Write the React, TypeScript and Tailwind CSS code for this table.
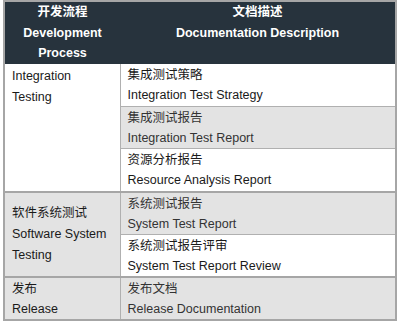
import React from 'react';

const font = { fontFamily: '"Liberation Sans", "Noto Sans CJK SC", sans-serif' };

export default function App() {
  return (
    <div className="w-[400px] h-[324px] bg-white px-[3px]" style={font}>
      <table className="w-[394px] border-collapse border-2 border-[#a6a6a6] text-[12.5px] leading-[20px] text-[#1a1a1a]">
        <thead>
          <tr className="bg-[#27333d] text-white font-bold align-top">
            <th className="w-[116px] h-[60px] text-center font-bold leading-[20.5px]">
              开发流程
              <br />
              Development
              <br />
              Process
            </th>
            <th className="text-center font-bold leading-[20.5px]">
              文档描述
              <br />
              Documentation Description
            </th>
          </tr>
        </thead>
        <tbody>
          {/* Integration testing */}
          <tr className="h-[43px]">
            <td rowSpan={3} className="align-top pl-[7px] pt-[2px] leading-[21px] border-r border-[#b0b0b0]">
              Integration
              <br />
              Testing
            </td>
            <td className="pl-[7px] pt-[1px] align-top">
              集成测试策略
              <br />
              Integration Test Strategy
            </td>
          </tr>
          <tr className="h-[42px] bg-[#e3e3e3] text-[#333]">
            <td className="pl-[7px] pt-[1px] align-top border-t border-[#b0b0b0]">
              集成测试报告
              <br />
              Integration Test Report
            </td>
          </tr>
          <tr className="h-[43px]">
            <td className="pl-[7px] pt-[1px] align-top border-t border-[#b0b0b0]">
              资源分析报告
              <br />
              Resource Analysis Report
            </td>
          </tr>

          {/* Software system testing */}
          <tr className="h-[42px] border-t-2 border-[#a6a6a6]">
            <td rowSpan={2} className="pl-[7px] align-middle leading-[21px] bg-[#e3e3e3] border-r border-[#b0b0b0]">
              软件系统测试
              <br />
              Software System
              <br />
              Testing
            </td>
            <td className="pl-[7px] pt-[1px] align-top bg-[#e3e3e3] text-[#333]">
              系统测试报告
              <br />
              System Test Report
            </td>
          </tr>
          <tr className="h-[43px]">
            <td className="pl-[7px] pt-[1px] align-top border-t border-[#b0b0b0]">
              系统测试报告评审
              <br />
              System Test Report Review
            </td>
          </tr>

          {/* Release */}
          <tr className="h-[42px] bg-[#e3e3e3] border-t-2 border-[#a6a6a6]">
            <td className="pl-[7px] pt-[1px] align-top border-r border-[#b0b0b0]">
              发布
              <br />
              Release
            </td>
            <td className="pl-[7px] pt-[1px] align-top text-[#333]">
              发布文档
              <br />
              Release Documentation
            </td>
          </tr>
        </tbody>
      </table>
    </div>
  );
}
